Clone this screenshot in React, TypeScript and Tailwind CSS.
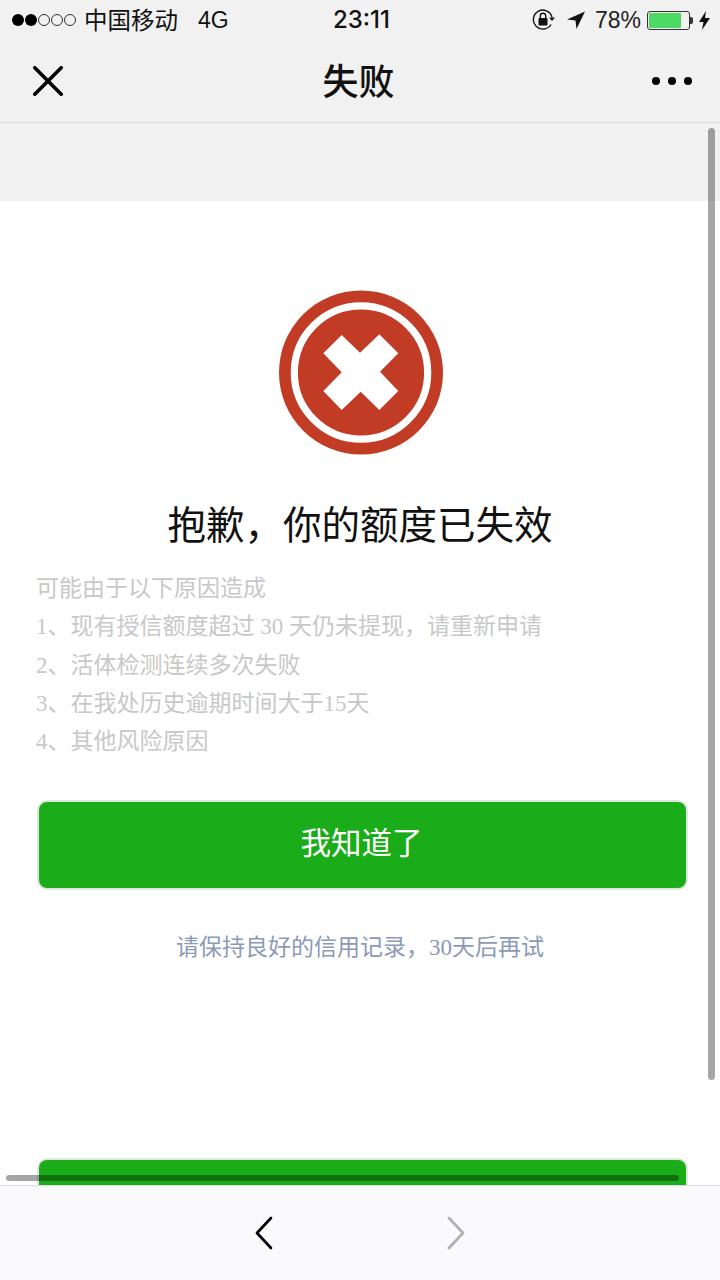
const sans = "font-['Noto_Sans_CJK_SC','Liberation_Sans',sans-serif]";

function Signal() {
  return (
    <div className="flex items-center gap-[1px]">
      {[1, 1, 0, 0, 0].map((f, i) => (
        <span key={i} className={f ? "w-[12px] h-[12px] rounded-full bg-black" : "w-[12px] h-[12px] rounded-full border border-[#333]"} />
      ))}
    </div>
  );
}

function StatusBar() {
  return (
    <div className="relative h-[40px] flex items-center justify-between pl-[12px] pr-[9px] text-[#111]">
      <div className="flex items-center">
        <Signal />
        <span className="ml-[8px] text-[23.5px] leading-[40px] -mt-[3px] font-['Noto_Sans_CJK_SC',sans-serif] font-normal">中国移动</span>
        <span className="ml-[20px] text-[23px] leading-[40px] font-['Liberation_Sans',sans-serif]">4G</span>
      </div>
      <span className="absolute left-[333px] top-0 text-[24px] leading-[40px] font-medium font-['Inter',sans-serif]">23:11</span>
      <div className="flex items-center -ml-[1px] pr-[1px]">
        <svg width="24" height="22" viewBox="0 0 24 22" fill="none">
          <path d="M19 15.5A9.5 9.5 0 1 1 20 8" stroke="#111" strokeWidth="1.4" />
          <path d="M17 8.5h6l-3 3.5z" fill="#111" />
          <rect x="6.5" y="9" width="9" height="7.5" rx="1" fill="#111" />
          <path d="M8.3 9V7a2.7 2.7 0 0 1 5.4 0v2" stroke="#111" strokeWidth="1.4" />
        </svg>
        <svg className="ml-[10px]" width="20" height="20" viewBox="0 0 20 20">
          <path d="M19 1.5L10.5 19 9.5 10.5 1 9.5z" fill="#111" />
        </svg>
        <span className="ml-[9px] text-[23px] leading-[40px] font-['Liberation_Sans',sans-serif] text-[#222]">78%</span>
        <div className="ml-[6px] w-[43px] h-[19px] rounded-[3px] border border-[#333] p-[1px] flex">
          <div className="w-[32px] h-full rounded-[1px] bg-[#4cd964]" />
        </div>
        <div className="w-[3px] h-[7px] bg-[#333] rounded-r-[2px]" />
        <svg className="ml-[6px]" width="11" height="19" viewBox="0 0 11 19">
          <path d="M7 0L0 11h4.5L3 19l8-12H6z" fill="#111" />
        </svg>
      </div>
    </div>
  );
}

function NavBar() {
  return (
    <div className="h-[83px] flex items-center justify-between relative border-b border-[#dcdcdc] pl-[33px] pr-[28px]">
      <svg width="30" height="30" viewBox="0 0 30 30" className="-mt-[1px]">
        <path d="M1.8 1.8L28.2 28.2M28.2 1.8L1.8 28.2" stroke="#000" strokeWidth="3.6" strokeLinecap="round" />
      </svg>
      <span className={`absolute left-0 right-[3px] text-center text-[36px] leading-[40px] -mt-[4px] font-medium text-[#111] ${sans}`}>失败</span>
      <div className="flex gap-[8px]">
        <span className="w-[8px] h-[8px] rounded-full bg-black" />
        <span className="w-[8px] h-[8px] rounded-full bg-black" />
        <span className="w-[8px] h-[8px] rounded-full bg-black" />
      </div>
    </div>
  );
}

function FailIcon() {
  return (
    <svg width="166" height="166" viewBox="0 0 166 166" className="block">
      <circle cx="83" cy="82.5" r="82" fill="#c13b25" />
      <circle cx="83" cy="82.5" r="66.7" fill="none" stroke="#fff" strokeWidth="7.2" />
      <path d="M63.7 45 L82 62.8 L101.3 44.3 L120.3 63.3 L102 81.7 L120.3 101 L101.3 120 L82.7 101.7 L63.7 120 L45.3 101 L63.7 82.3 L45.3 63.3 Z" fill="#fff" />
    </svg>
  );
}

const lines = [
  "可能由于以下原因造成",
  "1、现有授信额度超过 30 天仍未提现，请重新申请",
  "2、活体检测连续多次失败",
  "3、在我处历史逾期时间大于15天",
  "4、其他风险原因",
];

export default function App() {
  return (
    <div className="relative w-[720px] h-[1280px] overflow-hidden bg-white flex flex-col">
      <div className="bg-[#f1f1f1] shrink-0">
        <StatusBar />
        <NavBar />
        <div className="h-[78px]" />
      </div>

      <div className="flex-1 min-h-0 overflow-hidden flex flex-col items-center">
        <div className="mt-[89px] ml-[1px]"><FailIcon /></div>
        <h1 className={`mt-[41px] text-[38.5px] leading-[50px] font-normal text-[#111] ${sans}`}>抱歉，你的额度已失效</h1>
        <div className="mt-[23px] w-full pl-[36px] text-[23px] leading-[38.3px] text-[#c8c8c8] font-['Liberation_Serif','Noto_Sans_CJK_SC',serif]">
          {lines.map((l) => (
            <p key={l}>{l}</p>
          ))}
        </div>
        <button className={`mt-[38.5px] self-start ml-[37px] w-[651px] h-[90px] shrink-0 rounded-[10px] bg-[#1aad19] border-2 border-[#dfe6df] text-white text-[30.5px] pb-[6px] pr-[2px] ${sans}`}>
          我知道了
        </button>
        <p className="mt-[40px] text-[23px] leading-[36px] text-[#8b9ab8] font-['Liberation_Serif','Noto_Sans_CJK_SC',serif]">
          请保持良好的信用记录，30天后再试
        </p>
        <div className="mt-[192px] self-start ml-[37px] w-[651px] h-[40px] shrink-0 rounded-t-[10px] bg-[#1aad19] border-2 border-b-0 border-[#dfe6df]" />
      </div>

      <div className="h-[95px] shrink-0 bg-[#fafafc] border-t border-[#dedede] flex items-center justify-center gap-[172px] relative z-10">
        <svg width="20" height="34" viewBox="0 0 20 34" fill="none">
          <path d="M17 2L3 17l14 15" stroke="#000" strokeWidth="2.7" strokeLinecap="round" strokeLinejoin="round" />
        </svg>
        <svg width="20" height="34" viewBox="0 0 20 34" fill="none">
          <path d="M3 2l14 15L3 32" stroke="#b0b0b0" strokeWidth="2.7" strokeLinecap="round" strokeLinejoin="round" />
        </svg>
      </div>

      <div className="absolute left-[708px] top-[128px] w-[7px] h-[952px] rounded-full bg-black/35" />
      <div className="absolute left-[6px] top-[1175px] w-[673px] h-[6px] rounded-full bg-black/35" />
    </div>
  );
}
